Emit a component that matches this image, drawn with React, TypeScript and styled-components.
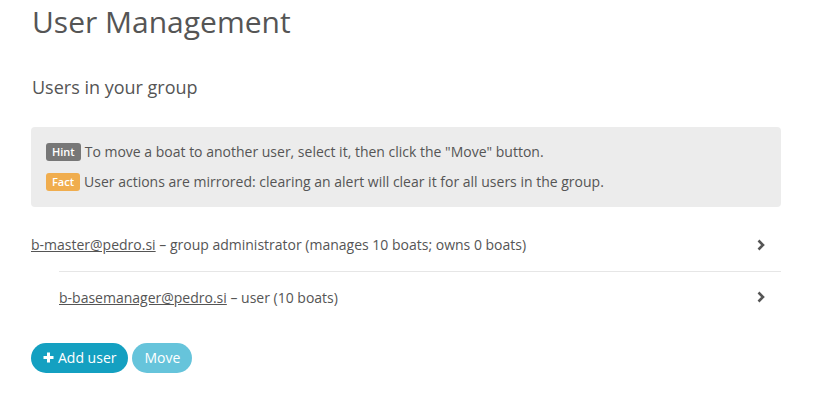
import React from 'react';
import styled, { createGlobalStyle } from 'styled-components';

const GlobalStyle = createGlobalStyle`
  body {
    margin: 0;
    background: #fff;
    font-family: 'Open Sans', 'Liberation Sans', sans-serif;
    color: #555;
    font-size: 14px;
  }
`;

const Page = styled.div`
  padding: 0 35px 0 31px;
`;

const Title = styled.h1`
  font-size: 30px;
  font-weight: 400;
  line-height: 1.1;
  margin: 5px 0 0 1px;
  color: #555;
`;

const Subtitle = styled.h3`
  font-size: 18px;
  font-weight: 400;
  line-height: 1.1;
  margin: 40px 0 0 1px;
  color: #555;
`;

const Alert = styled.div`
  margin-top: 29px;
  background: #ececec;
  border-radius: 4px;
  padding: 15px 15px 15px;
  display: flex;
  flex-direction: column;
  gap: 10px;
`;

const AlertLine = styled.div`
  display: flex;
  align-items: center;
  gap: 4px;
  line-height: 20px;
`;

const Label = styled.span<{ $tone: string }>`
  background: ${p => p.$tone};
  color: #fff;
  font-size: 11px;
  font-weight: 600;
  border-radius: 3px;
  padding: 0 6px;
  line-height: 18px;
`;

const List = styled.div`
  margin-top: 12px;
`;

const Row = styled.div<{ $indent: number }>`
  display: flex;
  align-items: center;
  justify-content: space-between;
  margin-left: ${p => p.$indent}px;
  height: 52px;
  padding-right: 15px;
  box-sizing: border-box;
  & + & {
    border-top: 1px solid #e6e6e6;
  }
`;

const Email = styled.a`
  color: #555;
  text-decoration: underline;
`;

const Chevron = () => (
  <svg width="10" height="12" viewBox="0 0 10 12">
    <path d="M2.5 1.5 L7 6 L2.5 10.5" fill="none" stroke="#555" strokeWidth="2.6" />
  </svg>
);

const Buttons = styled.div`
  display: flex;
  gap: 4px;
  margin-top: 20px;
`;

const Button = styled.button<{ $faded?: boolean }>`
  font-family: inherit;
  font-size: 14px;
  color: #fff;
  border: none;
  border-radius: 15px;
  height: 30px;
  padding: 0 12px;
  background: ${p => (p.$faded ? '#66c4db' : '#14a0c1')};
  display: flex;
  align-items: center;
  gap: 4px;
`;

const Plus = () => (
  <svg width="11" height="11" viewBox="0 0 11 11">
    <path d="M5.5 0.5 V10.5 M0.5 5.5 H10.5" stroke="#fff" strokeWidth="3" />
  </svg>
);

export default function App() {
  return (
    <Page>
      <GlobalStyle />
      <Title>User Management</Title>
      <Subtitle>Users in your group</Subtitle>
      <Alert>
        <AlertLine>
          <Label $tone="#777">Hint</Label>
          To move a boat to another user, select it, then click the "Move" button.
        </AlertLine>
        <AlertLine>
          <Label $tone="#f0ad4e">Fact</Label>
          User actions are mirrored: clearing an alert will clear it for all users in the group.
        </AlertLine>
      </Alert>
      <List>
        <Row $indent={0}>
          <span>
            <Email href="#">b-master@pedro.si</Email> – group administrator (manages 10 boats; owns 0 boats)
          </span>
          <Chevron />
        </Row>
        <Row $indent={28}>
          <span>
            <Email href="#">b-basemanager@pedro.si</Email> – user (10 boats)
          </span>
          <Chevron />
        </Row>
      </List>
      <Buttons>
        <Button>
          <Plus />
          Add user
        </Button>
        <Button $faded>Move</Button>
      </Buttons>
    </Page>
  );
}
